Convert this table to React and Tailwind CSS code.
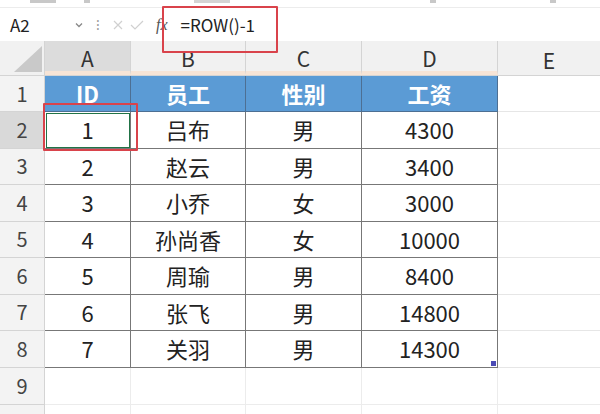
import React from "react";

const FONT = { fontFamily: '"Noto Sans CJK SC", "Noto Sans", sans-serif' };

const cols = [
  { key: "A", w: "w-[86px]" },
  { key: "B", w: "w-[115px]" },
  { key: "C", w: "w-[116px]" },
  { key: "D", w: "w-[136px]" },
];

const rows = [
  ["1", "吕布", "男", "4300"],
  ["2", "赵云", "男", "3400"],
  ["3", "小乔", "女", "3000"],
  ["4", "孙尚香", "女", "10000"],
  ["5", "周瑜", "男", "8400"],
  ["6", "张飞", "男", "14800"],
  ["7", "关羽", "男", "14300"],
];

const RowNum = ({ n, active }) => (
  <div
    className={`w-[45px] shrink-0 flex items-center justify-center text-[20px] text-[#444] border-r border-b border-[#d4d4d4] ${
      active ? "bg-[#d9d9d9]" : "bg-[#f3f3f3]"
    }`}
  >
    {n}
  </div>
);

export default function App() {
  return (
    <div className="relative w-[600px] h-[414px] overflow-hidden bg-white" style={FONT}>
      {/* clipped toolbar strip (only the bottom edge of its labels shows) */}
      <div className="h-[8px] bg-white flex items-start border-b border-[#ececec]">
        <span className="ml-[30px] w-[26px] h-[3px] bg-[#c8c8c8]" />
        <span className="ml-[28px] w-[6px] h-[3px] bg-[#c8c8c8]" />
        <span className="ml-[104px] w-[36px] h-[3px] bg-[#d4d4d4]" />
        <span className="ml-[200px] w-[6px] h-[3px] bg-[#c8c8c8]" />
        <span className="ml-[114px] w-[6px] h-[3px] bg-[#c8c8c8]" />
      </div>

      {/* formula bar */}
      <div className="h-[33px] flex items-center bg-white">
        <div className="w-[90px] flex items-center justify-between pl-[10px] pr-[6px] text-[17px] text-[#222]">
          <span>A2</span>
          <svg width="10" height="10" viewBox="0 0 10 10">
            <path d="M2 3.5 L5 6.5 L8 3.5" fill="none" stroke="#888" strokeWidth="1.3" />
          </svg>
        </div>
        <span className="w-[16px] text-center text-[14px] text-[#999]">⁝</span>
        <div className="flex items-center gap-[6px] ml-[6px]">
          <svg width="12" height="12" viewBox="0 0 12 12">
            <path d="M2 2 L10 10 M10 2 L2 10" stroke="#d0d0d0" strokeWidth="1.2" />
          </svg>
          <svg width="14" height="12" viewBox="0 0 14 12">
            <path d="M1 6 L5 10 L13 2" fill="none" stroke="#d0d0d0" strokeWidth="1.2" />
          </svg>
        </div>
        <span className="ml-[12px] text-[16px] italic text-[#555]" style={{ fontFamily: '"Liberation Serif", serif' }}>
          fx
        </span>
        <span className="ml-[13px] text-[17px] text-[#222]">=ROW()-1</span>
      </div>

      {/* column headers */}
      <div className="flex h-[35px] bg-[#f1f1f1] border-b border-[#d4d4d4]">
        <div className="w-[45px] shrink-0 flex items-end justify-end pr-[2px] pb-[3px] border-r border-[#d4d4d4]">
          <svg width="28" height="26" viewBox="0 0 28 26">
            <path d="M28 0 L28 26 L0 26 Z" fill="#c9c9c9" />
          </svg>
        </div>
        {cols.map((c) => (
          <div
            key={c.key}
            className={`${c.w} shrink-0 flex items-center justify-center pt-[5px] text-[21px] text-[#333] border-r border-[#d4d4d4] border-b-[4px] border-b-[#f7e4d6] ${
              c.key === "A" ? "bg-[#dcdcdc]" : ""
            }`}
          >
            {c.key}
          </div>
        ))}
        <div className="flex-1 flex items-center justify-center pt-[5px] text-[21px] text-[#333]">E</div>
      </div>

      {/* header row 1 */}
      <div className="flex h-[36px]">
        <RowNum n="1" />
        {["ID", "员工", "性别", "工资"].map((t, i) => (
          <div
            key={t}
            className={`${cols[i].w} shrink-0 flex items-center justify-center bg-[#5b9bd5] text-white font-bold text-[22px] border-r border-b border-[#4d6f93]`}
          >
            {t}
          </div>
        ))}
        <div className="flex-1 border-b border-[#e6e6e6]" />
      </div>

      {/* data rows */}
      {rows.map((r, ri) => (
        <div key={ri} className="flex h-[36.5px]">
          <RowNum n={ri + 2} active={ri === 0} />
          {r.map((v, ci) => (
            <div
              key={ci}
              className={`${cols[ci].w} shrink-0 relative flex items-center justify-center text-[22px] text-[#222] border-r border-b border-[#777] ${
                ri === 0 && ci === 0 ? "outline outline-1 -outline-offset-2 outline-[#217346]" : ""
              }`}
            >
              {v}
              {ri === 6 && ci === 3 && (
                <span className="absolute right-[1px] bottom-[1px] w-[5px] h-[5px] bg-[#4b4bb5]" />
              )}
            </div>
          ))}
          <div className="flex-1 border-b border-[#e6e6e6]" />
        </div>
      ))}

      {/* empty rows (row 10 is cut by the bottom edge, its number hidden) */}
      {["9", ""].map((n, i) => (
        <div key={i} className="flex h-[37px]">
          <RowNum n={n} />
          {cols.map((c) => (
            <div key={c.key} className={`${c.w} shrink-0 border-r border-b border-[#ececec]`} />
          ))}
          <div className="flex-1 border-b border-[#ececec]" />
        </div>
      ))}

      {/* red highlight boxes */}
      <div className="absolute left-[162px] top-[6px] w-[116px] h-[47px] border-2 border-[#d9434b] rounded-[1px]" />
      <div className="absolute left-[43px] top-[103px] w-[95px] h-[48px] border-2 border-[#d9434b] rounded-[1px]" />
    </div>
  );
}
